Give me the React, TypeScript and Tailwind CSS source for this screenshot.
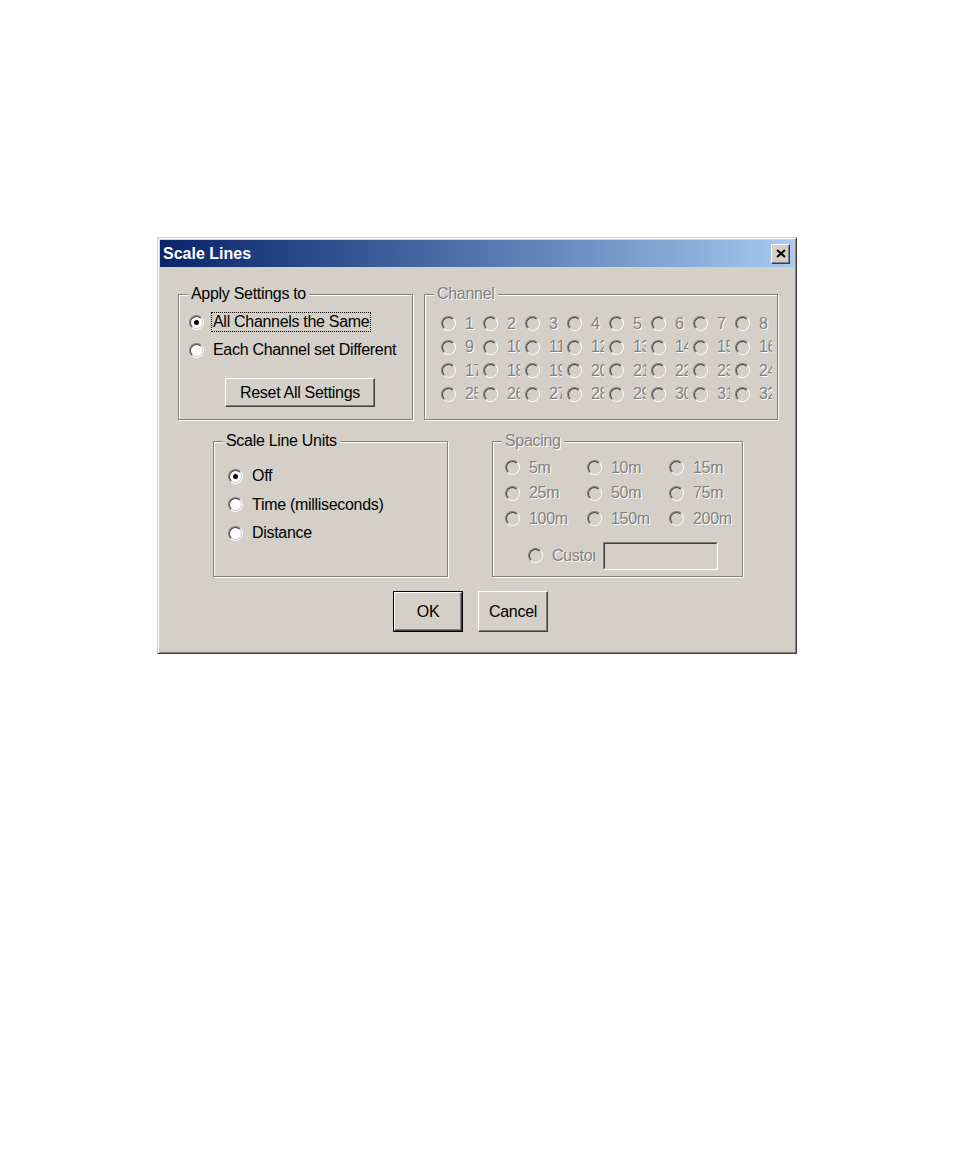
import React from "react";

const dimText = "text-[#808080] [text-shadow:1px_1px_0_#fff]";

function Radio({ checked = false, disabled = false }: { checked?: boolean; disabled?: boolean }) {
  return (
    <span className="flex h-[15px] w-[15px] shrink-0 rounded-full border border-t-[#808080] border-l-[#808080] border-r-white border-b-white">
      <span
        className={`flex flex-1 items-center justify-center rounded-full border border-t-[#404040] border-l-[#404040] border-r-[#d4d0c8] border-b-[#d4d0c8] ${
          disabled ? "bg-[#d4d0c8]" : "bg-white"
        }`}
      >
        {checked && <span className="h-[5px] w-[5px] rounded-full bg-black" />}
      </span>
    </span>
  );
}

function Group({
  label,
  disabled = false,
  className = "",
  children,
}: {
  label: string;
  disabled?: boolean;
  className?: string;
  children: React.ReactNode;
}) {
  return (
    <div className={`relative shrink-0 border border-[#808080] shadow-[1px_1px_0_#fff,inset_1px_1px_0_#fff] ${className}`}>
      <span className={`absolute -top-[10px] left-[9px] bg-[#d4d0c8] px-[3px] leading-[18px] ${disabled ? dimText : ""}`}>
        {label}
      </span>
      {children}
    </div>
  );
}

function Button({ label, isDefault = false, className = "" }: { label: string; isDefault?: boolean; className?: string }) {
  return (
    <div className={`shrink-0 ${isDefault ? "border border-black" : ""} ${className}`}>
      <div className="flex h-full w-full items-center justify-center border border-t-white border-l-white border-r-[#404040] border-b-[#404040] shadow-[inset_-1px_-1px_0_#808080]">
        {label}
      </div>
    </div>
  );
}

const channels = Array.from({ length: 32 }, (_, i) => i + 1);
const spacings = ["5m", "10m", "15m", "25m", "50m", "75m", "100m", "150m", "200m"];

export default function App() {
  return (
    <div className="min-h-[1158px] bg-white pl-[157px] pt-[237px] font-['Liberation_Sans',Arial,sans-serif] text-[16px] tracking-[-0.3px] text-black">
      <div className="flex h-[417px] w-[640px] flex-col border border-t-[#d4d0c8] border-l-[#d4d0c8] border-r-[#404040] border-b-[#404040] bg-[#d4d0c8] p-[2px] shadow-[inset_1px_1px_0_#fff,inset_-1px_-1px_0_#808080]">
        {/* title bar */}
        <div className="flex h-[27px] shrink-0 items-center justify-between bg-linear-to-r from-[#0a246a] to-[#a6caf0] pl-[3px] pr-[4px]">
          <span className="text-[16px] font-bold tracking-normal text-white">Scale Lines</span>
          <div className="flex h-[20px] w-[19px] items-center justify-center border border-t-white border-l-white border-r-[#404040] border-b-[#404040] bg-[#d4d0c8] shadow-[inset_-1px_-1px_0_#808080]">
            <svg width="10" height="9" viewBox="0 0 10 9">
              <path d="M1 1 L9 8 M9 1 L1 8" stroke="#000" strokeWidth="2" fill="none" />
            </svg>
          </div>
        </div>

        {/* row 1 */}
        <div className="ml-[18px] mt-[27px] flex gap-[11px]">
          <Group label="Apply Settings to" className="h-[126px] w-[235px]">
            <div className="flex flex-col pl-[10px] pt-[13px]">
              <div className="flex h-[28px] items-center">
                <Radio checked />
                <span className="ml-[7px] border border-dotted border-black px-[1px] leading-[18px]">All Channels the Same</span>
              </div>
              <div className="flex h-[28px] items-center">
                <Radio />
                <span className="ml-[9px]">Each Channel set Different</span>
              </div>
              <Button label="Reset All Settings" className="ml-[36px] mt-[14px] h-[29px] w-[150px]" />
            </div>
          </Group>

          <Group label="Channel" disabled className="h-[126px] w-[354px]">
            <div className="grid grid-cols-[repeat(8,42px)] pl-[16px] pt-[17px]">
              {channels.map((n) => (
                <div key={n} className="flex h-[23.5px] w-[37px] items-center overflow-hidden whitespace-nowrap">
                  <Radio disabled />
                  <span className={`ml-[9px] ${dimText}`}>{n}</span>
                </div>
              ))}
            </div>
          </Group>
        </div>

        {/* row 2 */}
        <div className="ml-[53px] mt-[21px] flex gap-[44px]">
          <Group label="Scale Line Units" className="h-[136px] w-[235px]">
            <div className="flex flex-col pl-[14px] pt-[20px]">
              {["Off", "Time (milliseconds)", "Distance"].map((t, i) => (
                <div key={t} className="flex h-[28.5px] items-center">
                  <Radio checked={i === 0} />
                  <span className="ml-[9px]">{t}</span>
                </div>
              ))}
            </div>
          </Group>

          <Group label="Spacing" disabled className="h-[136px] w-[251px]">
            <div className="grid grid-cols-[repeat(3,82px)] pl-[12px] pt-[13px]">
              {spacings.map((s) => (
                <div key={s} className="flex h-[25.5px] items-center whitespace-nowrap">
                  <Radio disabled />
                  <span className={`ml-[9px] ${dimText}`}>{s}</span>
                </div>
              ))}
            </div>
            <div className="ml-[35px] mt-[10px] flex h-[28px] items-center">
              <Radio disabled />
              <span className={`ml-[9px] w-[43px] overflow-hidden whitespace-nowrap ${dimText}`}>Custom</span>
              <div className="ml-[8px] h-[28px] w-[115px] border border-t-[#808080] border-l-[#808080] border-r-white border-b-white">
                <div className="h-full w-full border border-t-[#404040] border-l-[#404040] border-r-[#d4d0c8] border-b-[#d4d0c8] bg-[#d4d0c8]" />
              </div>
            </div>
          </Group>
        </div>

        {/* buttons */}
        <div className="ml-[233px] mt-[14px] flex gap-[15px]">
          <Button label="OK" isDefault className="h-[41px] w-[70px]" />
          <Button label="Cancel" className="h-[41px] w-[70px]" />
        </div>
      </div>
    </div>
  );
}
